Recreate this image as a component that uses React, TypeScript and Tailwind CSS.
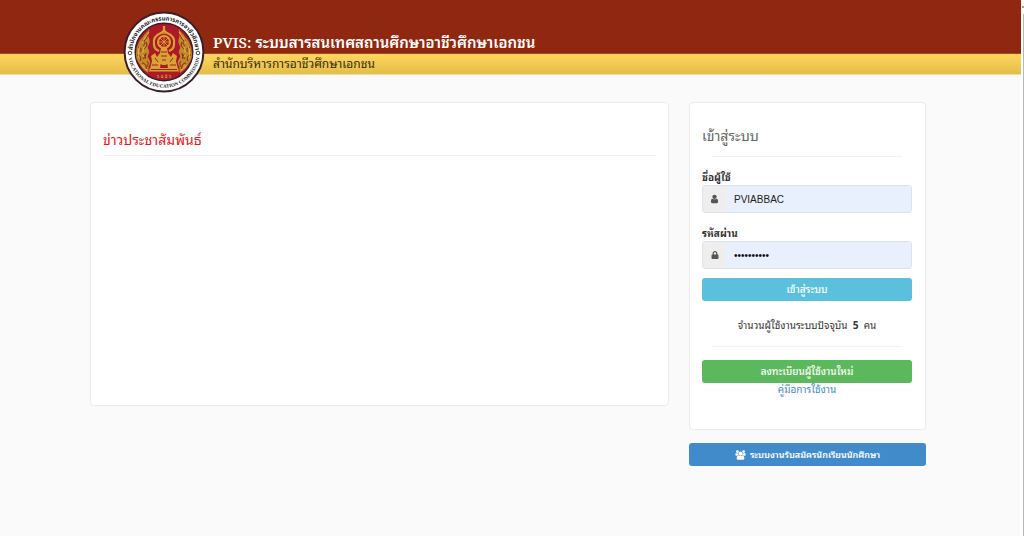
import { FaLock } from 'react-icons/fa'

function UserIcon() {
  return (
    <svg viewBox="128 0 1536 1792" className="h-[10px] w-[9px]" fill="#555" aria-hidden="true">
      <path d="M1536 1399q0 109-62.5 187t-150.5 78h-854q-88 0-150.5-78t-62.5-187q0-85 8.5-160.5t31.5-152 58.5-131 94-89 134.5-34.5q131 128 313 128t313-128q76 0 134.5 34.5t94 89 58.5 131 31.5 152 8.5 160.5zm-256-887q0 159-112.5 271.5t-271.5 112.5-271.5-112.5-112.5-271.5 112.5-271.5 271.5-112.5 271.5 112.5 112.5 271.5z" />
    </svg>
  )
}

function UsersIcon() {
  return (
    <svg viewBox="0 0 2048 1792" className="h-[10px] w-[11px]" fill="currentColor" aria-hidden="true">
      <path d="M657 896q-162 5-265 128h-134q-82 0-138-40.5t-56-118.5q0-353 124-353 6 0 43.5 21t97.5 42.5 119 21.5q67 0 133-23-5 37-5 66 0 139 81 256zm1071 637q0 120-73 189.5t-194 69.5h-874q-121 0-194-69.5t-73-189.5q0-53 3.5-103.5t14-109 26.5-108.5 43-97.5 62-81 85.5-53.5 111.5-20q10 0 43 21.5t73 48 107 48 135 21.5 135-21.5 107-48 73-48 43-21.5q61 0 111.5 20t85.5 53.5 62 81 43 97.5 26.5 108.5 14 109 3.5 103.5zm-1024-1277q0 106-75 181t-181 75-181-75-75-181 75-181 181-75 181 75 75 181zm704 384q0 159-112.5 271.5t-271.5 112.5-271.5-112.5-112.5-271.5 112.5-271.5 271.5-112.5 271.5 112.5 112.5 271.5zm576 225q0 78-56 118.5t-138 40.5h-134q-103-123-265-128 81-117 81-256 0-29-5-66 66 23 133 23 59 0 119-21.5t97.5-42.5 43.5-21q124 0 124 353zm-128-609q0 106-75 181t-181 75-181-75-75-181 75-181 181-75 181 75 75 181z" />
    </svg>
  )
}

function Flame() {
  return (
    <g>
      <path
        d="M-15 -23c-1 3-4 4-6 8c-2 2-4 4-5 8c-2 3-1 5-2 9c0 4 1 6 3 9c2 4 5 7 9 10c1-3 0-5 1-7c2-3 1-5 0-7c-2-2-1-4 0-6c1-3-2-4-1-7c2-3 2-5 1-8c-2-4 1-6 0-9z"
        fill="#c08a2b"
      />
      <path
        d="M-17 -18c1 3-1 5-3 7M-22 -12c3 1 4 4 1 6M-26 -5c3 0 4 3 2 5M-18 -10c2 3 0 5-2 7M-27 3c3 0 5 3 3 6M-22 1c3 1 3 4 1 6M-18 1c-1 3 0 4-1 6M-22 11c3 0 5 3 4 6M-17 9c2 2 1 4 0 6"
        fill="none"
        stroke="#87231c"
        strokeWidth="1"
      />
      <path
        d="M-15 -20c-2 4-5 6-7 11M-24 -6c-2 4-2 8-1 12M-20 -5c-1 4-2 6 0 10M-22 13c2 3 3 4 5 5"
        fill="none"
        stroke="#ecc244"
        strokeWidth="0.8"
      />
    </g>
  )
}

function Emblem() {
  return (
    <svg viewBox="-41 -41 82 82" className="size-[82px]" role="img" aria-label="Vocational Education Commission">
      <defs>
        <path id="ring-top" d="M-31.6 0A31.6 31.6 0 0 1 31.6 0" />
        <path id="ring-bottom" d="M-35.6 5A36 36 0 0 0 35.600 5" />
      </defs>
      <circle r="39.4" fill="#fff" stroke="#3a1d2b" strokeWidth="2" />
      <circle r="28.8" fill="#ab1a26" stroke="#3a1d2b" strokeWidth="1.4" />
      <text fill="#222" fontSize="6" fontWeight="700" fontFamily="'Noto Sans Thai', 'Noto Sans', sans-serif">
        <textPath href="#ring-top" startOffset="50%" textAnchor="middle">
          สำนักงานคณะกรรมการการอาชีวศึกษา
        </textPath>
      </text>
      <text fill="#222" fontSize="5" fontWeight="700" fontFamily="'Liberation Serif', serif">
        <textPath href="#ring-bottom" startOffset="50%" textAnchor="middle">
          VOCATIONAL EDUCATION COMMISSION
        </textPath>
      </text>
      <g fill="#fff" stroke="#333" strokeWidth="0.9">
        <circle cx="-34" cy="1" r="1.8" />
        <circle cx="34" cy="1" r="1.8" />
      </g>
      <Flame />
      <g transform="scale(-1 1)">
        <Flame />
      </g>
      <g stroke="#d9a233" fill="none">
        <path d="M0 -26V-21M-3 -19C-8 -17-11 -13-10 -8C-10 -4-8 -2-5 -1M3 -19C8 -17 11 -13 10 -8C10 -4 8 -2 5 -1" strokeWidth="2.2" />
        <path d="M0 -22l-3 3h6z" strokeWidth="1.6" />
        <circle cy="-10" r="6" strokeWidth="2" />
        <path d="M0 -15V-5M-5 -10H5M-4 -14L4 -6M4 -14L-4 -6" strokeWidth="0.9" />
      </g>
      <g fill="#d9a233">
        <path d="M-3 -4h6l1 5l3 4l2-4l4 3l-1 5l2 8h-10l-1-4h-6l-1 4h-10l2-8l-1-5l4-3l2 4l3-4z" />
        <path d="M-14 16h28l1 3.5h-30z" />
      </g>
      <path
        d="M-9 6l3 4M9 6l-3 4M-3 0h6M-3 4h6M-2 8h4M-12 13h6M6 13h6M-3 12v4M3 12v4M-13 17.5h26"
        stroke="#8d1b20"
        strokeWidth="0.9"
      />
      <text y="26" fill="#e6bd45" fontSize="5" textAnchor="middle" fontFamily="'Noto Sans Thai', 'Noto Sans', sans-serif">
        ๖ ๔ ๕ ๖
      </text>
    </svg>
  )
}

function Header() {
  return (
    <header className="relative">
      <div className="flex h-[54px] items-end border-b border-[#a8471b] bg-[#902711] pl-[213px]">
        <h1 className="font-['Noto_Serif','Noto_Sans_Thai_Looped','Noto_Sans_Thai','Noto_Sans',serif] text-[15px] leading-[22px] font-semibold text-white">
          PVIS: ระบบสารสนเทศสถานศึกษาอาชีวศึกษาเอกชน
        </h1>
      </div>
      <div className="flex h-[21px] items-center border-b border-[#f0dfa0] bg-linear-to-b from-[#ffd75f] to-[#e3bd49] pb-0.5 pl-[213px]">
        <p className="text-xs text-[#3b2a10]">สำนักบริหารการอาชีวศึกษาเอกชน</p>
      </div>
      <div className="absolute top-[11px] left-[123px]">
        <Emblem />
      </div>
    </header>
  )
}

function LoginCard() {
  return (
    <form
      className="flex flex-col rounded border border-[#ebebeb] bg-white pt-[22px] pr-[13px] pb-[34px] pl-3"
      onSubmit={(e) => e.preventDefault()}
    >
      <h2 className="text-sm leading-5 text-[#666]">เข้าสู่ระบบ</h2>
      <hr className="mx-[10px] mt-[11px] mb-[14px] border-[#f3f3f3]" />

      <label htmlFor="username" className="mb-0.5 text-[10px] leading-3 font-bold text-[#333]">
        ชื่อผู้ใช้
      </label>
      <div className="flex h-7 overflow-hidden rounded-[3px] border border-[#dde3ec]">
        <span className="flex w-[23px] items-center justify-center bg-[#eee]">
          <UserIcon />
        </span>
        <input
          id="username"
          type="text"
          defaultValue="PVIABBAC"
          className="min-w-0 flex-1 bg-[#e8f0fe] px-2 font-['Liberation_Sans',sans-serif] text-[10px] text-[#222]"
        />
      </div>

      <label htmlFor="password" className="mt-[14px] mb-0.5 text-[10px] leading-3 font-bold text-[#333]">
        รหัสผ่าน
      </label>
      <div className="flex h-7 overflow-hidden rounded-[3px] border border-[#dde3ec]">
        <span className="flex w-[23px] items-center justify-center bg-[#eee]">
          <FaLock className="size-2 text-[#555]" />
        </span>
        <input
          id="password"
          type="password"
          defaultValue="0123456789"
          className="min-w-0 flex-1 bg-[#e8f0fe] px-2 font-['Liberation_Sans',sans-serif] text-[10px] text-[#111]"
        />
      </div>

      <button type="submit" className="mt-[9px] h-[23px] rounded-[3px] bg-[#5bc0de] pb-0.5 text-[10px] font-medium text-white">
        เข้าสู่ระบบ
      </button>

      <p className="mt-[18px] text-center text-[10px] leading-3 text-[#333]">
        จำนวนผู้ใช้งานระบบปัจจุบัน &nbsp;<b>5</b>&nbsp; คน
      </p>
      <hr className="mx-[10px] mt-[15px] mb-[13px] border-[#f3f3f3]" />

      <button type="button" className="h-[23px] rounded-[3px] bg-[#5cb85c] pb-0.5 text-[10px] font-medium text-white">
        ลงทะเบียนผู้ใช้งานใหม่
      </button>
      <a href="#manual" className="text-center text-[10px] leading-3 text-[#428bca]">
        คู่มือการใช้งาน
      </a>
    </form>
  )
}

export default function App() {
  return (
    <div className="flex min-h-screen bg-white font-['Noto_Sans_Thai_Looped','Noto_Sans_Thai','Noto_Sans','Liberation_Sans',sans-serif]">
      <div className="min-w-0 flex-1 bg-[#fafafa]">
        <Header />
        <main className="grid grid-cols-[1fr_237px] items-start gap-5 pt-[27px] pr-[95px] pl-[90px]">
          <section className="min-h-[304px] rounded border border-[#ebebeb] bg-white px-3 pt-[26px]">
            <h2 className="border-b border-[#f3f3f3] pb-1.5 text-sm leading-5 text-[#e8191c]">ข่าวประชาสัมพันธ์</h2>
          </section>
          <div className="flex flex-col gap-[13px]">
            <LoginCard />
            <button
              type="button"
              className="flex h-[23px] items-center justify-center gap-1 rounded-[3px] bg-[#428bca] text-[9px] font-semibold text-white"
            >
              <UsersIcon />
              ระบบงานรับสมัครนักเรียนนักศึกษา
            </button>
          </div>
        </main>
      </div>
      <div className="flex w-[3px] flex-col items-end bg-white">
        <div className="mt-[6px] mb-[6px] size-[2px] bg-[#a0a0a0]" />
        <div className="w-px flex-1 bg-[#b5b5b5]" />
      </div>
    </div>
  )
}
